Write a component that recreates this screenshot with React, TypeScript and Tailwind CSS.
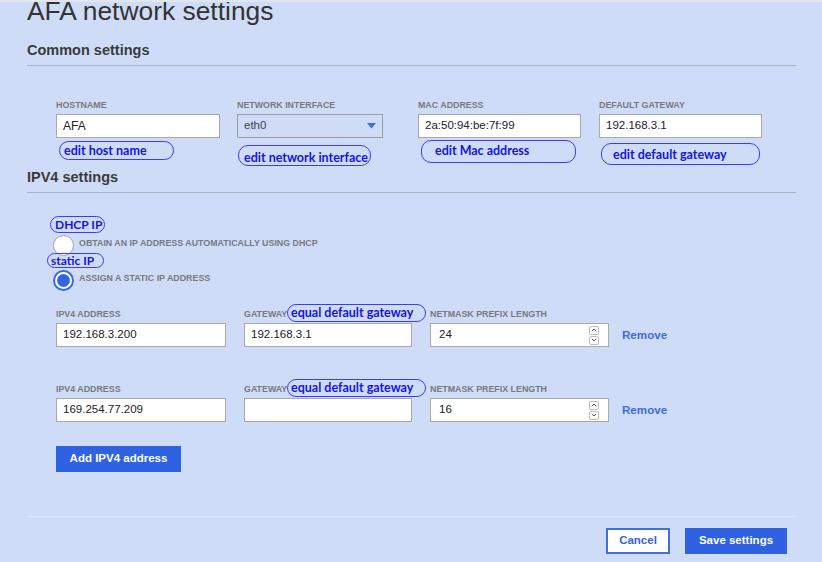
import React from "react";

const labelCls =
  "text-[8.85px] leading-[10px] font-bold uppercase text-[#76797f] whitespace-nowrap";
const inputCls =
  "h-[24px] border border-[#a9a9a9] bg-white pl-[6px] flex items-center text-[11.5px] text-[#222] whitespace-nowrap";

function Note({ children, className }: { children: React.ReactNode; className: string }) {
  return (
    <div
      className={
        "flex items-center border border-[#3b3bff] rounded-[10px] font-['Lato',sans-serif] font-bold text-[12.5px] leading-none text-[#1414e6] whitespace-nowrap " +
        className
      }
    >
      {children}
    </div>
  );
}

function Spinner() {
  return (
    <div className="flex flex-col gap-[1px] mr-[9px]">
      <div className="w-[10px] h-[9px] border border-[#bdbdbd] rounded-[2px] bg-white flex items-center justify-center">
        <svg width="6" height="4" viewBox="0 0 6 4">
          <path d="M0.8 3.2 L3 1 L5.2 3.2" stroke="#555" strokeWidth="1" fill="none" />
        </svg>
      </div>
      <div className="w-[10px] h-[9px] border border-[#bdbdbd] rounded-[2px] bg-white flex items-center justify-center">
        <svg width="6" height="4" viewBox="0 0 6 4">
          <path d="M0.8 0.8 L3 3 L5.2 0.8" stroke="#555" strokeWidth="1" fill="none" />
        </svg>
      </div>
    </div>
  );
}

function Ipv4Row({ ip, gw, mask, className }: { ip: string; gw: string; mask: string; className: string }) {
  return (
    <div className={"flex items-end pl-[29px] " + className}>
      <div className="flex flex-col w-[188px]">
        <div className={labelCls}>IPV4 ADDRESS</div>
        <div className={inputCls + " mt-[4px] w-[170px]"}>{ip}</div>
      </div>
      <div className="flex flex-col w-[186px]">
        <div className={"relative " + labelCls}>
          GATEWAY
          <Note className="absolute left-[43px] top-[-5px] w-[139px] h-[18px] pl-[3px] normal-case">
            equal default gateway
          </Note>
        </div>
        <div className={inputCls + " mt-[4px] w-[168px]"}>{gw}</div>
      </div>
      <div className="flex flex-col w-[192px]">
        <div className={labelCls}>NETMASK PREFIX LENGTH</div>
        <div className={inputCls + " mt-[4px] w-[179px] pl-[8px] justify-between"}>
          <span>{mask}</span>
          <Spinner />
        </div>
      </div>
      <div className="h-[24px] flex items-center text-[11.6px] font-bold text-[#3b6be2]">Remove</div>
    </div>
  );
}

export default function App() {
  return (
    <div className="w-[822px] h-[562px] overflow-hidden bg-[#cfdcf8] border-t-2 border-[#e1e6ee] font-['Liberation_Sans',Arial,sans-serif] text-[#333]">
      <div className="ml-[27px] w-[769px]">
        <h1 className="text-[26.4px] leading-[18px] text-[#333] whitespace-nowrap">AFA network settings</h1>
        <h2 className="mt-[20px] text-[14.5px] leading-[20px] font-bold text-[#3a3a3a]">Common settings</h2>
        <div className="mt-[5px] border-t border-[#a9b1bf]" />

        <div className="mt-[34px] pl-[29px] flex items-start">
          <div className="flex flex-col w-[181px]">
            <div className={labelCls}>HOSTNAME</div>
            <div className={inputCls + " mt-[4px] w-[164px] text-[12px]"}>AFA</div>
            <Note className="mt-[3px] ml-[3px] w-[115px] h-[19px] pl-[4px] pt-[2px]">edit host name</Note>
          </div>
          <div className="flex flex-col w-[181px]">
            <div className={labelCls}>NETWORK INTERFACE</div>
            <div className="mt-[4px] w-[146px] h-[24px] border border-[#9d9d9d] pl-[6px] pr-[6px] flex items-center justify-between text-[11.5px] text-[#444]">
              <span>eth0</span>
              <svg width="9" height="6" viewBox="0 0 9 6">
                <path d="M0 0 H9 L4.5 5.5 Z" fill="#3a6ee8" />
              </svg>
            </div>
            <Note className="mt-[7px] ml-[1px] w-[133px] h-[21px] pl-[5px] pt-[5px]">edit network interface</Note>
          </div>
          <div className="flex flex-col w-[181px]">
            <div className={labelCls}>MAC ADDRESS</div>
            <div className={inputCls + " mt-[4px] w-[163px]"}>2a:50:94:be:7f:99</div>
            <Note className="mt-[2px] ml-[3px] w-[155px] h-[23px] pl-[13px]">edit Mac address</Note>
          </div>
          <div className="flex flex-col w-[181px]">
            <div className={labelCls}>DEFAULT GATEWAY</div>
            <div className={inputCls + " mt-[4px] w-[163px]"}>192.168.3.1</div>
            <Note className="mt-[5px] ml-[2px] w-[159px] h-[22px] pl-[11px] pt-[2px]">edit default gateway</Note>
          </div>
        </div>

        <h2 className="mt-[1px] text-[14.5px] leading-[20px] font-bold text-[#3a3a3a]">IPV4 settings</h2>
        <div className="mt-[5px] border-t border-[#a9b1bf]" />

        <Note className="mt-[23px] ml-[23px] w-[55px] h-[17px] pl-[4px] text-[12px]">DHCP IP</Note>
        <div className="mt-[2px] ml-[26px] flex items-center">
          <div className="w-[21px] h-[21px] rounded-full bg-white border border-[#a3a3a3]" />
          <span className={labelCls + " ml-[5px] mb-[5px] text-[8.7px]"}>
            OBTAIN AN IP ADDRESS AUTOMATICALLY USING DHCP
          </span>
        </div>
        <Note className="relative mt-[-3px] ml-[20px] w-[57px] h-[15px] pl-[3px] text-[12px]">static IP</Note>
        <div className="mt-[2px] ml-[26px] flex items-center">
          <div className="w-[21px] h-[21px] rounded-full bg-white border-2 border-[#3a6ae0] flex items-center justify-center">
            <div className="w-[13px] h-[13px] rounded-full bg-[#3465e0]" />
          </div>
          <span className={labelCls + " ml-[5px] mb-[5px] text-[8.7px]"}>ASSIGN A STATIC IP ADDRESS</span>
        </div>

        <Ipv4Row className="mt-[18px]" ip="192.168.3.200" gw="192.168.3.1" mask="24" />
        <Ipv4Row className="mt-[37px]" ip="169.254.77.209" gw="" mask="16" />

        <div className="mt-[24px] ml-[29px] w-[125px] h-[26px] bg-[#2e62e2] flex items-center justify-center text-white font-bold text-[11.5px]">
          Add IPV4 address
        </div>

        <div className="mt-[44px] border-t border-[#dce4f6]" />

        <div className="mt-[11px] flex justify-end pr-[9px] gap-[15px]">
          <div className="w-[64px] h-[26px] bg-white border-2 border-[#3d6ee6] flex items-center justify-center text-[#3563dc] font-bold text-[11.5px]">
            Cancel
          </div>
          <div className="w-[102px] h-[26px] bg-[#2e62e2] flex items-center justify-center text-white font-bold text-[11.5px]">
            Save settings
          </div>
        </div>
      </div>
    </div>
  );
}
